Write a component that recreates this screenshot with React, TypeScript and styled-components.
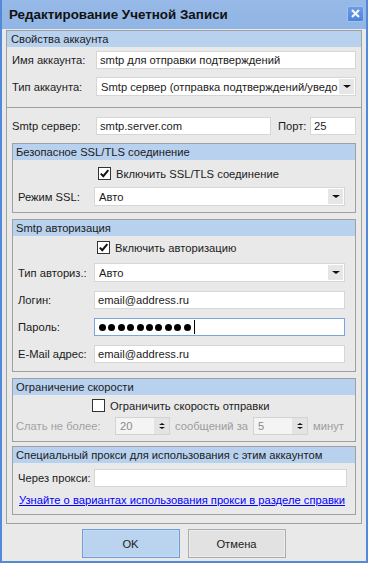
import React from 'react';
import styled, { createGlobalStyle } from 'styled-components';

const GlobalStyle = createGlobalStyle`
	html, body {
		margin: 0;
		padding: 0;
		background: #e9e9e9;
	}
	body {
		font-family: 'Liberation Sans', Arial, sans-serif;
		font-size: 11.2px;
		color: #1b1b1b;
	}
	* {
		box-sizing: border-box;
	}
`;

const Window = styled.div`
	width: 368px;
	height: 563px;
	display: flex;
	flex-direction: column;
	overflow: hidden;
	background: #e9e9e9;
	border: 2px solid #5389d8;
	border-top: none;
`;

const TitleBar = styled.div`
	height: 29px;
	flex: none;
	display: flex;
	align-items: center;
	justify-content: space-between;
	padding: 0 2px 0 7px;
	background: linear-gradient(#96b9e7, #91b5e4);
`;

const Title = styled.h1`
	margin: 0;
	font-size: 13.4px;
	font-weight: bold;
	color: #111;
`;

const CloseBtn = styled.button`
	width: 17px;
	height: 16px;
	padding: 0;
	margin-top: -2px;
	display: flex;
	align-items: center;
	justify-content: center;
	background: linear-gradient(#6a9be6, #4d84d9);
	border: 1px solid #9fc1ef;
	border-radius: 2px;
`;

const Body = styled.div`
	flex: 1;
	min-height: 0;
	display: flex;
	flex-direction: column;
	padding: 1px 4px 0;
`;

const Frame = styled.div`
	border: 1px solid #a0a0a0;
	display: flex;
	flex-direction: column;
`;

const Section = styled.div<{ divider?: boolean; pad: string }>`
	display: flex;
	flex-direction: column;
	padding: ${(p) => p.pad};
	border-top: ${(p) => (p.divider ? '1px solid #a0a0a0' : 'none')};
`;

const Band = styled.div<{ inset: number }>`
	height: 16px;
	line-height: 16px;
	padding-left: ${(p) => p.inset}px;
	background: #b8d1ee;
	color: #1b1b1b;
	white-space: nowrap;
	overflow: hidden;
`;

const Rows = styled.div<{ pad: string; gap: number }>`
	display: flex;
	flex-direction: column;
	gap: ${(p) => p.gap}px;
	padding: ${(p) => p.pad};
`;

const Group = styled.div<{ top: number }>`
	margin-top: ${(p) => p.top}px;
	border: 1px solid #a0a0a0;
	display: flex;
	flex-direction: column;
`;

const FieldRow = styled.div<{ cols: string }>`
	display: grid;
	grid-template-columns: ${(p) => p.cols};
	align-items: center;
`;

const Label = styled.span<{ muted?: boolean; indent?: number }>`
	white-space: nowrap;
	padding-left: ${(p) => p.indent || 0}px;
	color: ${(p) => (p.muted ? '#a2a2a2' : '#1b1b1b')};
`;

const TextBox = styled.div<{ focused?: boolean }>`
	height: 18px;
	min-width: 0;
	display: flex;
	align-items: center;
	padding-left: 3px;
	background: #fff;
	border: 1px solid ${(p) => (p.focused ? '#7aa6dc' : '#d6d6d6')};
	white-space: nowrap;
	overflow: hidden;
`;

const Select = styled.div`
	height: 19px;
	min-width: 0;
	display: flex;
	align-items: center;
	background: #fff;
	border: 1px solid #d6d6d6;
`;

const SelectText = styled.span`
	flex: 1;
	min-width: 0;
	padding-left: 4px;
	white-space: nowrap;
	overflow: hidden;
`;

const DropBtn = styled.span`
	width: 15px;
	height: 15px;
	margin-right: 1px;
	flex: none;
	display: flex;
	align-items: center;
	justify-content: center;
	background: #e6e6e6;
`;

const Triangle = styled.span<{ up?: boolean; size?: number }>`
	width: 0;
	height: 0;
	border-left: ${(p) => p.size || 4}px solid transparent;
	border-right: ${(p) => p.size || 4}px solid transparent;
	${(p) =>
		p.up
			? `border-bottom: ${(p.size || 4) - 1}px solid #111;`
			: `border-top: ${(p.size || 4) - 1}px solid #111;`}
`;

const CheckRow = styled.label<{ left: number }>`
	display: flex;
	align-items: center;
	gap: 5px;
	height: 13px;
	margin-left: ${(p) => p.left}px;
	white-space: nowrap;
`;

const Box = styled.span`
	width: 13px;
	height: 13px;
	flex: none;
	display: flex;
	align-items: center;
	justify-content: center;
	background: #fff;
	border: 1px solid #333;
`;

const Dots = styled.div`
	display: flex;
	align-items: center;
	gap: 2.4px;
	padding-left: 1px;
`;

const Dot = styled.span`
	width: 7px;
	height: 7px;
	border-radius: 50%;
	background: #000;
`;

const Caret = styled.span`
	width: 1px;
	height: 14px;
	margin-left: 3px;
	background: #000;
`;

const SpeedRow = styled.div`
	display: flex;
	align-items: center;
	padding-left: 3px;
	gap: 5px;
	color: #9d9d9d;
	white-space: nowrap;
`;

const Spinner = styled.div`
	width: 55px;
	height: 18px;
	flex: none;
	display: flex;
	align-items: center;
	padding-left: 4px;
	background: #f4f4f4;
	border: 1px solid #d3d3d3;
	color: #8a8a8a;
`;

const SpinArrows = styled.span`
	width: 15px;
	height: 16px;
	margin-left: auto;
	display: flex;
	flex-direction: column;
	align-items: center;
	justify-content: center;
	gap: 2px;
	background: #e4e4e4;
`;

const HelpLink = styled.a`
	display: block;
	height: 14px;
	line-height: 14px;
	padding-left: 6px;
	color: #0000ff;
	text-decoration: underline;
	white-space: nowrap;
`;

const Buttons = styled.div`
	display: flex;
	justify-content: center;
	gap: 8px;
	margin-top: 5px;
	padding-right: 1px;
`;

const Button = styled.button<{ primary?: boolean }>`
	width: 98px;
	height: 29px;
	font-family: inherit;
	font-size: 11.2px;
	color: #1b1b1b;
	background: ${(p) => (p.primary ? '#bad3ef' : '#e2e2e2')};
	border: 1px solid ${(p) => (p.primary ? '#6e9ed8' : '#acacac')};
	box-shadow: inset 0 0 0 1px ${(p) => (p.primary ? '#c6dbf3' : '#ececec')};
`;

function Check() {
	return (
		<svg width='11' height='11' viewBox='0 0 11 11'>
			<path d='M1.8 5.6 L4.3 8.2 L9.3 2.2' fill='none' stroke='#111' strokeWidth='2' />
		</svg>
	);
}

function DropDown({ value }: { value: string }) {
	return (
		<Select>
			<SelectText>{value}</SelectText>
			<DropBtn>
				<Triangle />
			</DropBtn>
		</Select>
	);
}

function SpinBox({ value }: { value: string }) {
	return (
		<Spinner>
			<span>{value}</span>
			<SpinArrows>
				<Triangle up size={3} />
				<Triangle size={3} />
			</SpinArrows>
		</Spinner>
	);
}

export default function App() {
	return (
		<>
			<GlobalStyle />
			<Window>
				<TitleBar>
					<Title>Редактирование Учетной Записи</Title>
					<CloseBtn>
						<svg width='9' height='9' viewBox='0 0 9 9'>
							<path d='M1 1 L8 8 M8 1 L1 8' stroke='#f2f6fd' strokeWidth='2.2' />
						</svg>
					</CloseBtn>
				</TitleBar>
				<Body>
					<Frame>
						<Section pad='0'>
							<Band inset={4}>Свойства аккаунта</Band>
							<Rows pad='4px 5px 11px 5px' gap={8}>
								<FieldRow cols='84px minmax(0, 1fr)'>
									<Label>Имя аккаунта:</Label>
									<TextBox>smtp для отправки подтверждений</TextBox>
								</FieldRow>
								<FieldRow cols='84px minmax(0, 1fr)'>
									<Label>Тип аккаунта:</Label>
									<DropDown value='Smtp сервер (отправка подтверждений/уведо' />
								</FieldRow>
							</Rows>
						</Section>

						<Section divider pad='9px 5px 8px 5px'>
							<FieldRow cols='84px 175px 39px 46px'>
								<Label>Smtp сервер:</Label>
								<TextBox>smtp.server.com</TextBox>
								<Label indent={7}>Порт:</Label>
								<TextBox>25</TextBox>
							</FieldRow>

							<Group top={8}>
								<Band inset={3}>Безопасное SSL/TLS соединение</Band>
								<Rows pad='7px 10px 6px 5px' gap={7}>
									<CheckRow left={80}>
										<Box>
											<Check />
										</Box>
										Включить SSL/TLS соединение
									</CheckRow>
									<FieldRow cols='76px minmax(0, 1fr)'>
										<Label>Режим SSL:</Label>
										<DropDown value='Авто' />
									</FieldRow>
								</Rows>
							</Group>

							<Group top={6}>
								<Band inset={3}>Smtp авторизация</Band>
								<Rows pad='5px 10px 8px 5px' gap={9}>
									<CheckRow left={79}>
										<Box>
											<Check />
										</Box>
										Включить авторизацию
									</CheckRow>
									<FieldRow cols='76px minmax(0, 1fr)'>
										<Label>Тип авториз.:</Label>
										<DropDown value='Авто' />
									</FieldRow>
									<FieldRow cols='76px minmax(0, 1fr)'>
										<Label>Логин:</Label>
										<TextBox>email@address.ru</TextBox>
									</FieldRow>
									<FieldRow cols='76px minmax(0, 1fr)'>
										<Label>Пароль:</Label>
										<TextBox focused>
											<Dots>
												{Array.from({ length: 10 }).map((_, i) => (
													<Dot key={i} />
												))}
											</Dots>
											<Caret />
										</TextBox>
									</FieldRow>
									<FieldRow cols='76px minmax(0, 1fr)'>
										<Label>E-Mail адрес:</Label>
										<TextBox>email@address.ru</TextBox>
									</FieldRow>
								</Rows>
							</Group>

							<Group top={6}>
								<Band inset={3}>Ограничение скорости</Band>
								<Rows pad='4px 10px 6px 0' gap={5}>
									<CheckRow left={79}>
										<Box />
										Ограничить скорость отправки
									</CheckRow>
									<SpeedRow>
										<Label muted style={{ width: 94 }}>
											Слать не более:
										</Label>
										<SpinBox value='20' />
										<span>сообщений за</span>
										<SpinBox value='5' />
										<span>минут</span>
									</SpeedRow>
								</Rows>
							</Group>

							<Group top={4}>
								<Band inset={3}>Специальный прокси для использования с этим аккаунтом</Band>
								<Rows pad='6px 8px 7px 0' gap={6}>
									<FieldRow cols='81px minmax(0, 1fr)'>
										<Label indent={5}>Через прокси:</Label>
										<TextBox />
									</FieldRow>
									<HelpLink href='#'>Узнайте о вариантах использования прокси в разделе справки</HelpLink>
								</Rows>
							</Group>
						</Section>
					</Frame>

					<Buttons>
						<Button primary>OK</Button>
						<Button>Отмена</Button>
					</Buttons>
				</Body>
			</Window>
		</>
	);
}
